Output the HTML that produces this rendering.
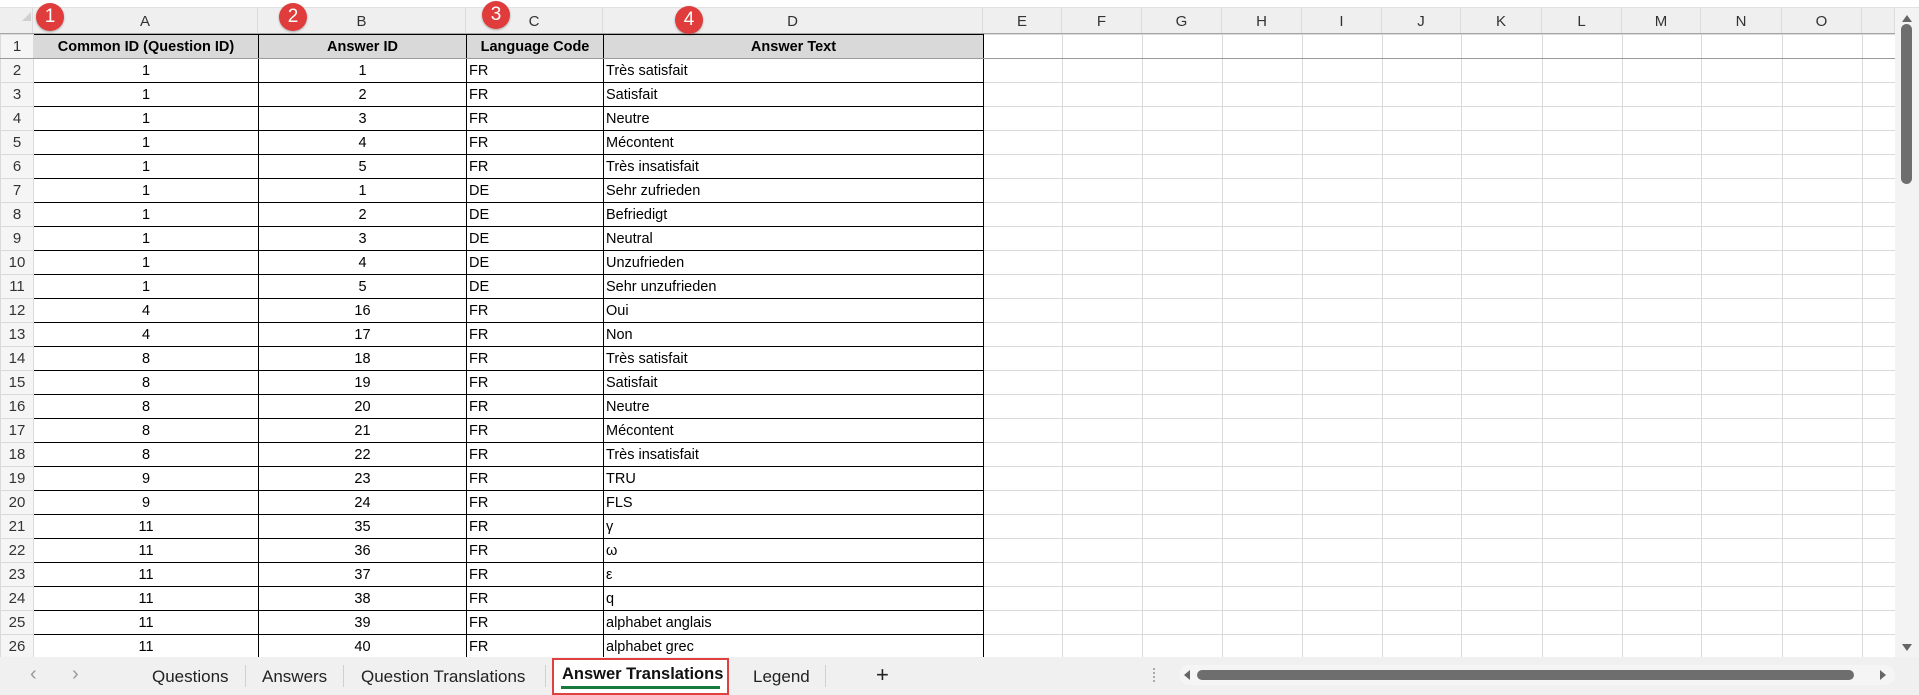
<!DOCTYPE html>
<html><head><meta charset="utf-8"><style>
*{margin:0;padding:0;box-sizing:border-box}
body{width:1919px;height:695px;overflow:hidden;background:#fff;font-family:"Liberation Sans",sans-serif;position:relative}
#top{position:absolute;left:0;top:0;width:1919px;height:8px;background:#fff;border-bottom:1px solid #e1e1e1}
#colhdr{position:absolute;left:0;top:8px;width:1895px;height:26px;background:#efefef;border-bottom:1px solid #a6a6a6}
.ch{position:absolute;top:0;height:25px;line-height:27px;text-align:center;font-size:15px;color:#333;border-right:1px solid #dcdcdc}
#corner{position:absolute;left:22px;top:12px;width:0;height:0;border-left:9px solid transparent;border-bottom:9px solid #d0d0d0}
table{position:absolute;left:0;top:34px;border-collapse:collapse;table-layout:fixed;width:1895px}
td{height:24px;font-size:14.5px;color:#000;border:1px solid #dadada;padding:0 2px;white-space:nowrap;overflow:hidden;line-height:22px}
td.rn{background:#f5f5f5;text-align:center;color:#333;border-color:#dadada;font-size:15px}
td.d{border:1px solid #000}
td.c{text-align:center}
tr.h td.d{background:#d9d9d9;font-weight:bold;text-align:center}
tr.h td{border-bottom-color:#9a9a9a}
.badge{position:absolute;width:28px;height:28px;border-radius:50%;background:#e03c3c;color:#fff;font-size:19px;line-height:28px;text-align:center;box-shadow:0 1px 2px rgba(0,0,0,.3)}
#vs{position:absolute;left:1895px;top:8px;width:24px;height:649px;background:#f3f3f3}
#tabs{position:absolute;left:0;top:657px;width:1919px;height:38px;background:#f0f0f0}
.t{position:absolute;top:10px;font-size:17px;color:#222}
.sep{position:absolute;top:8px;width:1px;height:22px;background:#d0d0d0}
</style></head><body>
<div id="top"></div>
<div id="colhdr">
<div class="ch" style="left:0;width:33px"></div>
<div class="ch" style="left:33px;width:225px">A</div>
<div class="ch" style="left:258px;width:208px">B</div>
<div class="ch" style="left:466px;width:137px">C</div>
<div class="ch" style="left:603px;width:380px">D</div>
<div class="ch" style="left:983px;width:79px">E</div>
<div class="ch" style="left:1062px;width:80px">F</div>
<div class="ch" style="left:1142px;width:80px">G</div>
<div class="ch" style="left:1222px;width:80px">H</div>
<div class="ch" style="left:1302px;width:80px">I</div>
<div class="ch" style="left:1382px;width:79px">J</div>
<div class="ch" style="left:1461px;width:81px">K</div>
<div class="ch" style="left:1542px;width:80px">L</div>
<div class="ch" style="left:1622px;width:79px">M</div>
<div class="ch" style="left:1701px;width:81px">N</div>
<div class="ch" style="left:1782px;width:80px">O</div>
<div class="ch" style="left:1862px;width:33px"></div>
</div>
<div id="corner"></div>
<table>
<colgroup><col style="width:33px"><col style="width:225px"><col style="width:208px"><col style="width:137px"><col style="width:380px"><col style="width:79px"><col style="width:80px"><col style="width:80px"><col style="width:80px"><col style="width:80px"><col style="width:79px"><col style="width:81px"><col style="width:80px"><col style="width:79px"><col style="width:81px"><col style="width:80px"><col style="width:33px"></colgroup>
<tr class="h"><td class="rn">1</td><td class="d">Common ID (Question ID)</td><td class="d">Answer ID</td><td class="d">Language Code</td><td class="d">Answer Text</td><td></td><td></td><td></td><td></td><td></td><td></td><td></td><td></td><td></td><td></td><td></td><td></td></tr>
<tr><td class="rn">2</td><td class="d c">1</td><td class="d c">1</td><td class="d">FR</td><td class="d">Très satisfait</td><td></td><td></td><td></td><td></td><td></td><td></td><td></td><td></td><td></td><td></td><td></td><td></td></tr>
<tr><td class="rn">3</td><td class="d c">1</td><td class="d c">2</td><td class="d">FR</td><td class="d">Satisfait</td><td></td><td></td><td></td><td></td><td></td><td></td><td></td><td></td><td></td><td></td><td></td><td></td></tr>
<tr><td class="rn">4</td><td class="d c">1</td><td class="d c">3</td><td class="d">FR</td><td class="d">Neutre</td><td></td><td></td><td></td><td></td><td></td><td></td><td></td><td></td><td></td><td></td><td></td><td></td></tr>
<tr><td class="rn">5</td><td class="d c">1</td><td class="d c">4</td><td class="d">FR</td><td class="d">Mécontent</td><td></td><td></td><td></td><td></td><td></td><td></td><td></td><td></td><td></td><td></td><td></td><td></td></tr>
<tr><td class="rn">6</td><td class="d c">1</td><td class="d c">5</td><td class="d">FR</td><td class="d">Très insatisfait</td><td></td><td></td><td></td><td></td><td></td><td></td><td></td><td></td><td></td><td></td><td></td><td></td></tr>
<tr><td class="rn">7</td><td class="d c">1</td><td class="d c">1</td><td class="d">DE</td><td class="d">Sehr zufrieden</td><td></td><td></td><td></td><td></td><td></td><td></td><td></td><td></td><td></td><td></td><td></td><td></td></tr>
<tr><td class="rn">8</td><td class="d c">1</td><td class="d c">2</td><td class="d">DE</td><td class="d">Befriedigt</td><td></td><td></td><td></td><td></td><td></td><td></td><td></td><td></td><td></td><td></td><td></td><td></td></tr>
<tr><td class="rn">9</td><td class="d c">1</td><td class="d c">3</td><td class="d">DE</td><td class="d">Neutral</td><td></td><td></td><td></td><td></td><td></td><td></td><td></td><td></td><td></td><td></td><td></td><td></td></tr>
<tr><td class="rn">10</td><td class="d c">1</td><td class="d c">4</td><td class="d">DE</td><td class="d">Unzufrieden</td><td></td><td></td><td></td><td></td><td></td><td></td><td></td><td></td><td></td><td></td><td></td><td></td></tr>
<tr><td class="rn">11</td><td class="d c">1</td><td class="d c">5</td><td class="d">DE</td><td class="d">Sehr unzufrieden</td><td></td><td></td><td></td><td></td><td></td><td></td><td></td><td></td><td></td><td></td><td></td><td></td></tr>
<tr><td class="rn">12</td><td class="d c">4</td><td class="d c">16</td><td class="d">FR</td><td class="d">Oui</td><td></td><td></td><td></td><td></td><td></td><td></td><td></td><td></td><td></td><td></td><td></td><td></td></tr>
<tr><td class="rn">13</td><td class="d c">4</td><td class="d c">17</td><td class="d">FR</td><td class="d">Non</td><td></td><td></td><td></td><td></td><td></td><td></td><td></td><td></td><td></td><td></td><td></td><td></td></tr>
<tr><td class="rn">14</td><td class="d c">8</td><td class="d c">18</td><td class="d">FR</td><td class="d">Très satisfait</td><td></td><td></td><td></td><td></td><td></td><td></td><td></td><td></td><td></td><td></td><td></td><td></td></tr>
<tr><td class="rn">15</td><td class="d c">8</td><td class="d c">19</td><td class="d">FR</td><td class="d">Satisfait</td><td></td><td></td><td></td><td></td><td></td><td></td><td></td><td></td><td></td><td></td><td></td><td></td></tr>
<tr><td class="rn">16</td><td class="d c">8</td><td class="d c">20</td><td class="d">FR</td><td class="d">Neutre</td><td></td><td></td><td></td><td></td><td></td><td></td><td></td><td></td><td></td><td></td><td></td><td></td></tr>
<tr><td class="rn">17</td><td class="d c">8</td><td class="d c">21</td><td class="d">FR</td><td class="d">Mécontent</td><td></td><td></td><td></td><td></td><td></td><td></td><td></td><td></td><td></td><td></td><td></td><td></td></tr>
<tr><td class="rn">18</td><td class="d c">8</td><td class="d c">22</td><td class="d">FR</td><td class="d">Très insatisfait</td><td></td><td></td><td></td><td></td><td></td><td></td><td></td><td></td><td></td><td></td><td></td><td></td></tr>
<tr><td class="rn">19</td><td class="d c">9</td><td class="d c">23</td><td class="d">FR</td><td class="d">TRU</td><td></td><td></td><td></td><td></td><td></td><td></td><td></td><td></td><td></td><td></td><td></td><td></td></tr>
<tr><td class="rn">20</td><td class="d c">9</td><td class="d c">24</td><td class="d">FR</td><td class="d">FLS</td><td></td><td></td><td></td><td></td><td></td><td></td><td></td><td></td><td></td><td></td><td></td><td></td></tr>
<tr><td class="rn">21</td><td class="d c">11</td><td class="d c">35</td><td class="d">FR</td><td class="d">γ</td><td></td><td></td><td></td><td></td><td></td><td></td><td></td><td></td><td></td><td></td><td></td><td></td></tr>
<tr><td class="rn">22</td><td class="d c">11</td><td class="d c">36</td><td class="d">FR</td><td class="d">ω</td><td></td><td></td><td></td><td></td><td></td><td></td><td></td><td></td><td></td><td></td><td></td><td></td></tr>
<tr><td class="rn">23</td><td class="d c">11</td><td class="d c">37</td><td class="d">FR</td><td class="d">ε</td><td></td><td></td><td></td><td></td><td></td><td></td><td></td><td></td><td></td><td></td><td></td><td></td></tr>
<tr><td class="rn">24</td><td class="d c">11</td><td class="d c">38</td><td class="d">FR</td><td class="d">q</td><td></td><td></td><td></td><td></td><td></td><td></td><td></td><td></td><td></td><td></td><td></td><td></td></tr>
<tr><td class="rn">25</td><td class="d c">11</td><td class="d c">39</td><td class="d">FR</td><td class="d">alphabet anglais</td><td></td><td></td><td></td><td></td><td></td><td></td><td></td><td></td><td></td><td></td><td></td><td></td></tr>
<tr><td class="rn">26</td><td class="d c">11</td><td class="d c">40</td><td class="d">FR</td><td class="d">alphabet grec</td><td></td><td></td><td></td><td></td><td></td><td></td><td></td><td></td><td></td><td></td><td></td><td></td></tr>
</table>
<div class="badge" style="left:36px;top:3px">1</div>
<div class="badge" style="left:279px;top:3px">2</div>
<div class="badge" style="left:482px;top:1px">3</div>
<div class="badge" style="left:675px;top:6px">4</div>
<div id="vs">
<div style="position:absolute;left:7px;top:7px;width:0;height:0;border-left:5px solid transparent;border-right:5px solid transparent;border-bottom:7px solid #666"></div>
<div style="position:absolute;left:6px;top:16px;width:11px;height:160px;border-radius:6px;background:#6e6e6e"></div>
<div style="position:absolute;left:7px;top:636px;width:0;height:0;border-left:5px solid transparent;border-right:5px solid transparent;border-top:7px solid #666"></div>
</div>
<div id="tabs">
<div class="t" style="left:30px;color:#999;font-size:20px;top:6px">&#x2039;</div>
<div class="t" style="left:72px;color:#999;font-size:20px;top:6px">&#x203A;</div>
<div class="t" style="left:152px">Questions</div>
<div class="sep" style="left:245px"></div>
<div class="t" style="left:262px">Answers</div>
<div class="sep" style="left:343px"></div>
<div class="t" style="left:361px">Question Translations</div>
<div class="sep" style="left:545px"></div>
<div style="position:absolute;left:552px;top:1px;width:177px;height:37px;border:2px solid #e04040;background:#fff"></div>
<div class="t" style="left:562px;top:8px;font-weight:bold;color:#111;font-size:16.5px">Answer Translations</div>
<div style="position:absolute;left:561px;top:29px;width:159px;height:3px;background:#157a3c"></div>
<div class="t" style="left:753px">Legend</div>
<div class="sep" style="left:825px"></div>
<div class="t" style="left:876px;font-size:22px;top:5px">+</div>
<div style="position:absolute;left:1153px;top:11px;width:2px;height:14px;border-left:2px dotted #aaa"></div>
<div style="position:absolute;left:1179px;top:8px;width:716px;height:20px;border-radius:10px;background:#f5f5f5"></div>
<div style="position:absolute;left:1184px;top:13px;width:0;height:0;border-top:5px solid transparent;border-bottom:5px solid transparent;border-right:6px solid #666"></div>
<div style="position:absolute;left:1197px;top:13px;width:657px;height:10px;border-radius:5px;background:#6e6e6e"></div>
<div style="position:absolute;left:1880px;top:13px;width:0;height:0;border-top:5px solid transparent;border-bottom:5px solid transparent;border-left:6px solid #666"></div>
</div>
</body></html>
